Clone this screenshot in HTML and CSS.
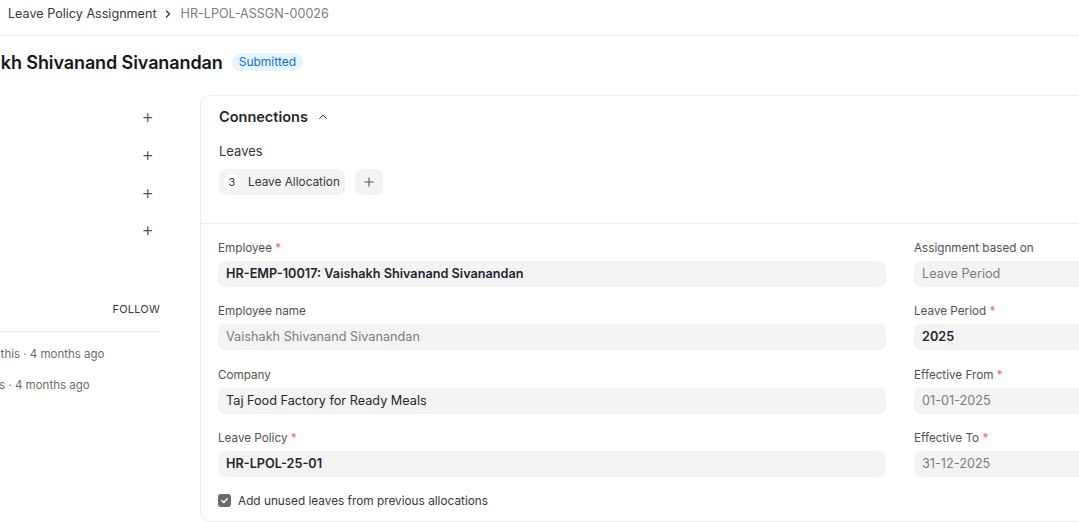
FILE: index.html
```html
<!DOCTYPE html>
<html lang="en">
  <head>
    <meta charset="UTF-8" />
    <meta name="viewport" content="width=device-width, initial-scale=1.0" />
    <title>HR-LPOL-ASSGN-00026</title>
    <link rel="stylesheet" href="styles.css">
  </head>
  <body>
    <header class="navbar">
      <nav class="breadcrumb">
        <a href="#">Leave Policy Assignment</a>
        <svg class="crumb-sep" width="12" height="12" viewBox="0 0 12 12"><path d="M4.5 3 L7.5 6 L4.5 9" fill="none" stroke="#333" stroke-width="1.3" stroke-linecap="round" stroke-linejoin="round"/></svg>
        <span class="current">HR-LPOL-ASSGN-00026</span>
      </nav>
    </header>

    <div class="page">
      <div class="page-head">
        <h1 class="title">Vaishakh Shivanand Sivanandan</h1>
        <span class="badge">Submitted</span>
      </div>

      <div class="page-body">
        <aside class="sidebar">
          <ul class="side-list">
            <li><span class="side-label">Assigned To</span><span class="plus">+</span></li>
            <li><span class="side-label">Attachments</span><span class="plus">+</span></li>
            <li><span class="side-label">Tags</span><span class="plus">+</span></li>
            <li><span class="side-label">Share</span><span class="plus">+</span></li>
          </ul>
          <div class="follow-row">
            <span class="side-label">Followed by</span>
            <span class="follow">FOLLOW</span>
          </div>
          <div class="activity">
            <p>Administrator last edited this · 4 months ago</p>
            <p>Administrator created this · 4 months ago</p>
          </div>
        </aside>

        <main class="form-card">
          <section class="connections">
            <div class="conn-head">
              <h2>Connections</h2>
              <svg width="12" height="12" viewBox="0 0 12 12"><path d="M2.5 7.5 L6 4 L9.5 7.5" fill="none" stroke="#333" stroke-width="1" stroke-linecap="round" stroke-linejoin="round"/></svg>
            </div>
            <div class="conn-group">Leaves</div>
            <div class="conn-items">
              <span class="pill"><span class="count">3</span>Leave Allocation</span>
              <span class="pill pill-add">
                <svg width="12" height="12" viewBox="0 0 12 12"><path d="M6 1.5 V10.5 M1.5 6 H10.5" stroke="#555" stroke-width="1.1"/></svg>
              </span>
            </div>
          </section>

          <section class="fields">
            <div class="col">
              <div class="field">
                <label>Employee <span class="req">*</span></label>
                <div class="input strong">HR-EMP-10017: Vaishakh Shivanand Sivanandan</div>
              </div>
              <div class="field">
                <label>Employee name</label>
                <div class="input muted">Vaishakh Shivanand Sivanandan</div>
              </div>
              <div class="field">
                <label>Company</label>
                <div class="input">Taj Food Factory for Ready Meals</div>
              </div>
              <div class="field">
                <label>Leave Policy <span class="req">*</span></label>
                <div class="input strong">HR-LPOL-25-01</div>
              </div>
              <div class="check-row">
                <span class="checkbox">
                  <svg width="9" height="9" viewBox="0 0 10 10"><path d="M2 5.2 L4.2 7.2 L8 3" fill="none" stroke="#fff" stroke-width="1.6" stroke-linecap="round" stroke-linejoin="round"/></svg>
                </span>
                <span>Add unused leaves from previous allocations</span>
              </div>
            </div>
            <div class="col">
              <div class="field">
                <label>Assignment based on</label>
                <div class="input muted">Leave Period</div>
              </div>
              <div class="field">
                <label>Leave Period <span class="req">*</span></label>
                <div class="input strong">2025</div>
              </div>
              <div class="field">
                <label>Effective From <span class="req">*</span></label>
                <div class="input muted">01-01-2025</div>
              </div>
              <div class="field">
                <label>Effective To <span class="req">*</span></label>
                <div class="input muted">31-12-2025</div>
              </div>
            </div>
          </section>
        </main>
      </div>
    </div>
  </body>
</html>
```

FILE: styles.css
```css
* {
  margin: 0;
  padding: 0;
  box-sizing: border-box;
  font-family: "Inter", "Noto Sans", sans-serif;
}
body {
  width: 100%;
  height: 100vh;
  overflow: hidden;
  background: #fff;
  color: #1f272e;
}
ul {
  list-style: none;
}
a {
  color: inherit;
  text-decoration: none;
}

/* top bar */
.navbar {
  height: 36px;
  border-bottom: 1px solid #ededed;
  padding: 5px 8px 0;
}
.breadcrumb {
  display: flex;
  align-items: center;
  font-size: 12.6px;
  line-height: 17px;
  color: #383838;
}
.breadcrumb .crumb-sep {
  margin: 0 7px 0 5px;
}
.breadcrumb .current {
  color: #7c7c7c;
}

/* page */
.page {
  width: 1900px;
  margin-left: -120px;
}
.page-head {
  display: flex;
  align-items: center;
  gap: 9px;
  height: 59px;
  padding-left: 63px;
  padding-bottom: 7px;
}
.title {
  font-size: 18px;
  font-weight: 600;
  color: #171717;
  letter-spacing: -0.1px;
}
.badge {
  font-size: 12px;
  line-height: 18px;
  padding: 0 7px;
  border-radius: 9px;
  background: #e6f4ff;
  color: #0b72cf;
}
.page-body {
  display: flex;
  gap: 40px;
}

/* sidebar */
.sidebar {
  width: 280px;
  flex-shrink: 0;
  padding-top: 3px;
  font-size: 13px;
  color: #383838;
}
.side-list li {
  display: flex;
  justify-content: space-between;
  align-items: center;
  height: 37.7px;
  padding-right: 6px;
}
.plus {
  font-size: 19px;
  font-weight: 300;
  color: #525252;
}
.follow-row {
  display: flex;
  justify-content: space-between;
  align-items: center;
  margin-top: 52px;
  padding-bottom: 14px;
  border-bottom: 1px solid #e2e2e2;
}
.follow {
  font-size: 11px;
  color: #383838;
  letter-spacing: 0.2px;
}
.activity {
  padding-top: 12px;
  margin-left: -15px;
  font-size: 11.5px;
  color: #6b6b6b;
}
.activity p {
  line-height: 20px;
  margin-bottom: 11px;
  white-space: nowrap;
}

/* form card */
.form-card {
  width: 1400px;
  flex-shrink: 0;
  border: 1px solid #ededed;
  border-radius: 10px;
  height: 427px;
}
.connections {
  padding: 11px 18px 28px;
  border-bottom: 1px solid #ededed;
}
.conn-head {
  display: flex;
  align-items: center;
  gap: 9px;
}
.conn-head h2 {
  font-size: 14.5px;
  font-weight: 600;
  line-height: 20px;
  color: #1f272e;
}
.conn-group {
  margin-top: 16px;
  font-size: 13px;
  line-height: 16px;
  color: #383838;
}
.conn-items {
  display: flex;
  gap: 10px;
  margin-top: 10px;
}
.pill {
  display: flex;
  align-items: center;
  height: 26px;
  padding: 0 5px;
  border-radius: 7px;
  background: #f3f3f3;
  font-size: 11.8px;
  color: #383838;
}
.pill .count {
  width: 16px;
  height: 16px;
  border-radius: 50%;
  background: #fff;
  font-size: 11px;
  display: flex;
  align-items: center;
  justify-content: center;
  margin-right: 8px;
}
.pill-add {
  width: 28px;
  justify-content: center;
}

.fields {
  display: flex;
  gap: 28px;
  padding: 16px 17px 0;
}
.col {
  width: 668px;
}
.field {
  margin-bottom: 16.4px;
}
.field label {
  display: block;
  font-size: 11.7px;
  line-height: 16px;
  color: #525252;
  margin-bottom: 5px;
}
.req {
  color: #e86c6c;
}
.input {
  height: 26px;
  border-radius: 7px;
  background: #f3f3f3;
  padding: 0 8px;
  font-size: 12.7px;
  line-height: 26px;
  color: #1f272e;
}
.input.strong {
  font-weight: 600;
}
.input.muted {
  color: #7c7c7c;
}
.check-row {
  display: flex;
  align-items: center;
  gap: 7px;
  margin-top: 0;
  font-size: 11.8px;
  color: #383838;
}
.checkbox {
  width: 13px;
  height: 13px;
  border-radius: 3px;
  background: #6b6b6b;
  display: flex;
  align-items: center;
  justify-content: center;
}
```
